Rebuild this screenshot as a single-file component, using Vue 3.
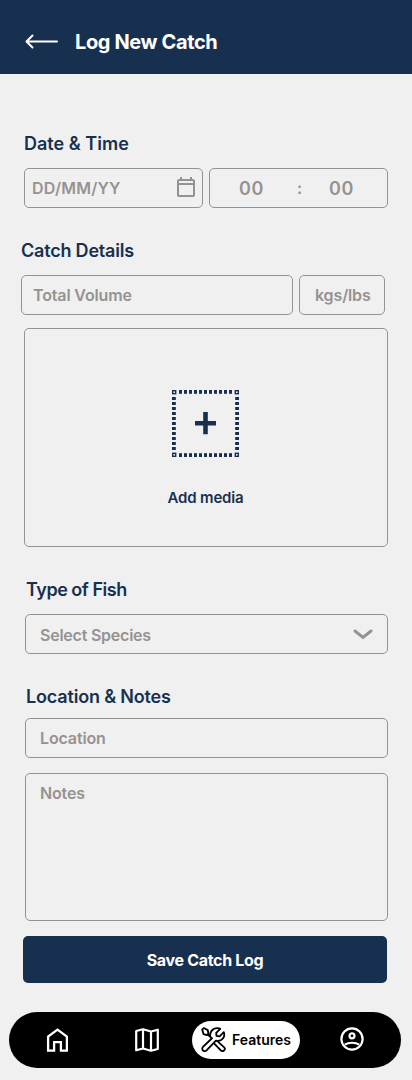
<script setup>
const dashes = Array.from({ length: 11 }, (_, i) => 8.5 + i * 5)
</script>

<template>
  <main class="screen">
    <header class="topbar">
      <svg class="back" width="34" height="16" viewBox="0 0 34 16" fill="none" stroke="#fff" stroke-width="2" stroke-linecap="round" stroke-linejoin="round">
        <path d="M32 7.5H1.5M7.5 1.5l-6 6 6 6" />
      </svg>
      <h1>Log New Catch</h1>
    </header>

    <form class="form" @submit.prevent>
      <h2 class="l-date">Date &amp; Time</h2>
      <div class="row">
        <div class="field date">
          <span class="t-date">DD/MM/YY</span>
          <svg width="24" height="24" viewBox="0 0 24 24" fill="#969291">
            <path d="M5 22q-.8 0-1.4-.6T3 20V6q0-.8.6-1.4T5 4h1V2h2v2h8V2h2v2h1q.8 0 1.4.6T21 6v14q0 .8-.6 1.4T19 22H5Zm0-2h14V10H5v10ZM5 8h14V6H5v2Z" />
          </svg>
        </div>
        <div class="field time"><span class="num">00</span><span class="colon">:</span><span class="num">00</span></div>
      </div>

      <h2 class="l-catch">Catch Details</h2>
      <div class="row volume">
        <div class="field total"><span class="t-total">Total Volume</span></div>
        <div class="field unit"><span class="t-unit">kgs/lbs</span></div>
      </div>
      <div class="media">
        <svg width="67" height="67" viewBox="0 0 67 67" fill="#18304f">
          <g v-for="d in dashes" :key="d">
            <rect :x="d - 1.5" y="0" width="3" height="3.8" />
            <rect :x="d - 1.5" y="63.2" width="3" height="3.8" />
            <rect x="0" :y="d - 1.5" width="3.8" height="3" />
            <rect x="63.2" :y="d - 1.5" width="3.8" height="3" />
          </g>
          <g fill="none" stroke="#18304f" stroke-width="1.4">
            <rect x=".7" y=".7" width="3" height="3" />
            <rect x="63.3" y=".7" width="3" height="3" />
            <rect x=".7" y="63.3" width="3" height="3" />
            <rect x="63.3" y="63.3" width="3" height="3" />
          </g>
          <path d="M31.2 22h4.6v9h8.2v4.4h-8.2v8.8h-4.6v-8.8H23V31h8.2z" />
        </svg>
        <span class="t-media">Add media</span>
      </div>

      <h2 class="l-fish">Type of Fish</h2>
      <div class="field wide select">
        <span class="t-species">Select Species</span>
        <svg width="20" height="11" viewBox="0 0 20 11" fill="none" stroke="#969291" stroke-width="3" stroke-linecap="round">
          <path d="m2 2 8 6.4L18 2" />
        </svg>
      </div>

      <h2 class="l-loc">Location &amp; Notes</h2>
      <div class="field wide"><span class="t-loc">Location</span></div>
      <div class="field wide notes"><span class="t-notes">Notes</span></div>
      <button class="save"><span>Save Catch Log</span></button>
    </form>

    <nav class="nav">
      <svg class="home" width="22" height="24" viewBox="0 0 22 24" fill="none" stroke="#fff" stroke-width="2.3">
        <path d="M2.1 22.6V8.7l9.4-7 9.4 7v13.9h-6v-8.4H8.1v8.4z" />
      </svg>
      <svg class="map" width="24" height="24" viewBox="0 0 24 24" fill="none" stroke="#fff" stroke-width="2.2" stroke-linejoin="round">
        <path d="M1.2 3 8 1.2l8 2.3 6.8-1.8V21L16 22.8l-8-2.3-6.8 1.8zM8 1.2v19.3M16 3.5v19.3" />
      </svg>
      <div class="pill">
        <svg width="25" height="25" viewBox="0 0 26 26" fill="none" stroke="#000" stroke-width="1.9" stroke-linejoin="round" stroke-linecap="round">
          <path d="M1.2 2.7 3 1.1l4 2.2.8 3.5-1.7 1.6-3.4-.9z" />
          <path d="m7.2 7.8 4 4M9.8 10.3c-1.2-4.5 1.8-9.2 7.5-9.1 1 0 2 .3 2.7.7l-4.2 4.3.3 3 3.3.5 4.3-4.3c1.8 4.3-1.5 9.4-7 9l-1.2-.2-9.7 10c-1 1.2-2.6 1.2-3.7.2s-1.1-2.6 0-3.7l9.3-9" />
          <path d="m17 14.7 6.9 6.2c1.1 1 1.1 2.5.2 3.5s-2.5 1-3.5 0l-6.5-6.8" />
        </svg>
        <span>Features</span>
      </div>
      <svg class="user" width="24" height="24" viewBox="0 0 24 24" fill="none" stroke="#fff" stroke-width="2.2">
        <circle cx="12" cy="12" r="10.6" />
        <circle cx="12" cy="8.8" r="2.5" />
        <path d="M4.8 17.6c3.7-2.5 10.7-2.5 14.4 0" />
      </svg>
    </nav>
  </main>
</template>

<style>
body { margin: 0; background: #f0f0f0; }
</style>

<style scoped>
.screen { width: 412px; height: 1080px; background: #f0f0f0; overflow: hidden; font-family: Inter, "Liberation Sans", sans-serif; box-sizing: border-box; }
.screen * { box-sizing: border-box; }
svg { display: block; flex: none; }
span, h1, h2 { white-space: nowrap; }
.topbar { height: 74px; background: #18304f; display: flex; align-items: center; padding: 10px 0 0 25px; gap: 16px; }
h1 { margin: 0; color: #fff; font-size: 20px; line-height: 24px; font-weight: 650; letter-spacing: -.38px; }
.form { display: flex; flex-direction: column; height: 938px; padding: 58px 24px 0; }
h2 { margin: 0; color: #18304f; font-size: 18px; line-height: 24px; font-weight: 600; letter-spacing: -.2px; }
.row { display: flex; gap: 6px; }
.l-date { margin-bottom: 12px; letter-spacing: .02px; }
.l-catch { margin: 31px 0 12px -3px; }
.l-fish { margin: 31px 0 12px 2px; letter-spacing: -.48px; }
.l-loc { margin: 31px 0 9px 2px; letter-spacing: -.17px; }
.field { height: 40px; flex: none; border: 1px solid #969291; border-radius: 5px; display: flex; align-items: center; color: #969291; font-size: 16px; line-height: 20px; font-weight: 580; letter-spacing: -.14px; }
.date { width: 179px; padding: 0 4px 2px 7px; justify-content: space-between; }
.t-date { letter-spacing: .22px; padding-top: 2px; }
.time { width: 179px; padding-left: 29px; }
.num { width: 26px; font-size: 18px; letter-spacing: .6px; padding-top: 2px; }
.colon { width: 64px; text-align: center; padding-left: 5px; }
.volume { margin-left: -3px; }
.total { width: 272px; padding-left: 11px; }
.unit { width: 86px; padding-left: 15px; }
.media { height: 219px; flex: none; margin-top: 13px; border: 1px solid #969291; border-radius: 5px; display: flex; flex-direction: column; align-items: center; padding: 61px 2px 0 0; gap: 31px; color: #18304f; font-size: 15px; line-height: 20px; font-weight: 600; }
.t-media { letter-spacing: -.15px; margin-left: 1px; }
.wide { margin-left: 1px; padding: 0 15px 0 14px; }
.select { justify-content: space-between; padding-right: 14px; }
.t-species { letter-spacing: -.23px; padding-top: 2px; }
.notes { height: 148px; margin-top: 15px; align-items: flex-start; padding-top: 9px; }
.save { width: 364px; height: 47px; flex: none; margin: 15px 0 0 -1px; border: 0; border-radius: 5px; background: #18304f; color: #fff; font: 650 16px/20px Inter, "Liberation Sans", sans-serif; letter-spacing: -.32px; padding: 0; }
.nav { width: 392px; height: 56px; margin: 0 auto 0 9px; border-radius: 28px; background: #000; display: flex; align-items: center; padding: 0 37px 1px 37px; }
.map { margin-left: 67px; }
.pill { width: 108px; height: 38px; margin-left: 33px; border-radius: 19px; background: #fff; display: flex; align-items: center; padding-left: 9px; gap: 6px; color: #000; font-size: 14px; line-height: 20px; font-weight: 600; }
.user { margin-left: 40px; margin-top: -1px; }
</style>
